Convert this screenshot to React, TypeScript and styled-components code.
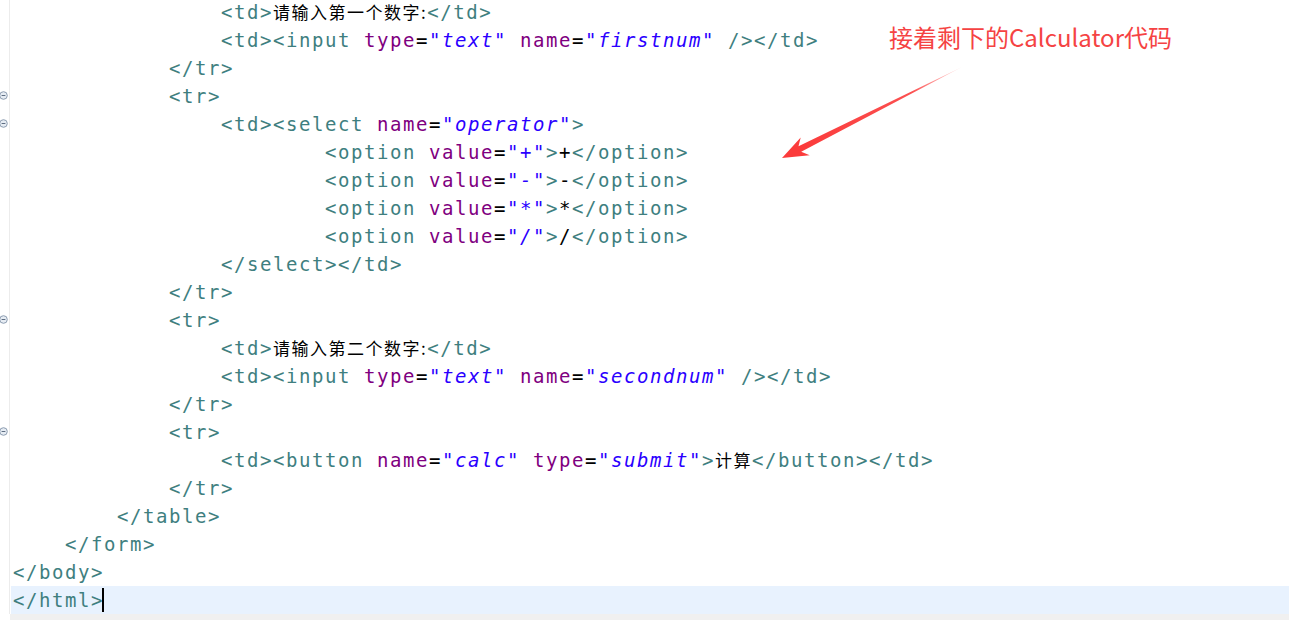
import React from "react"
import styled, { createGlobalStyle } from "styled-components"

type Kind = "tag" | "attr" | "val" | "plain" | "cjk"
type Token = [Kind, string]
type Line = { indent: number; fold?: boolean; tokens: Token[] }

const CHAR = 13

const tag = (s: string): Token => ["tag", s]
const attr = (s: string): Token => ["attr", s]
const val = (s: string): Token => ["val", s]
const txt = (s: string): Token => ["plain", s]
const cjk = (s: string): Token => ["cjk", s]

const option = (v: string): Line => ({
  indent: 24,
  tokens: [tag("<option"), txt(" "), attr("value"), txt("="), val(`"${v}"`), tag(">"), txt(v), tag("</option>")],
})

const lines: Line[] = [
  { indent: 16, tokens: [tag("<td>"), cjk("请输入第一个数字:"), tag("</td>")] },
  {
    indent: 16,
    tokens: [
      tag("<td><input"), txt(" "), attr("type"), txt("="), val('"text"'), txt(" "),
      attr("name"), txt("="), val('"firstnum"'), tag(" /></td>"),
    ],
  },
  { indent: 12, tokens: [tag("</tr>")] },
  { indent: 12, fold: true, tokens: [tag("<tr>")] },
  { indent: 16, fold: true, tokens: [tag("<td><select"), txt(" "), attr("name"), txt("="), val('"operator"'), tag(">")] },
  option("+"),
  option("-"),
  option("*"),
  option("/"),
  { indent: 16, tokens: [tag("</select></td>")] },
  { indent: 12, tokens: [tag("</tr>")] },
  { indent: 12, fold: true, tokens: [tag("<tr>")] },
  { indent: 16, tokens: [tag("<td>"), cjk("请输入第二个数字:"), tag("</td>")] },
  {
    indent: 16,
    tokens: [
      tag("<td><input"), txt(" "), attr("type"), txt("="), val('"text"'), txt(" "),
      attr("name"), txt("="), val('"secondnum"'), tag(" /></td>"),
    ],
  },
  { indent: 12, tokens: [tag("</tr>")] },
  { indent: 12, fold: true, tokens: [tag("<tr>")] },
  {
    indent: 16,
    tokens: [
      tag("<td><button"), txt(" "), attr("name"), txt("="), val('"calc"'), txt(" "),
      attr("type"), txt("="), val('"submit"'), tag(">"), cjk("计算"), tag("</button></td>"),
    ],
  },
  { indent: 12, tokens: [tag("</tr>")] },
  { indent: 8, tokens: [tag("</table>")] },
  { indent: 4, tokens: [tag("</form>")] },
  { indent: 0, tokens: [tag("</body>")] },
  { indent: 0, tokens: [tag("</html>")] },
]

const FoldIcon = () => (
  <svg width="9" height="9" viewBox="0 0 9 9">
    <circle cx="4.5" cy="4.5" r="3.8" fill="#e6ecf3" stroke="#8c9cb0" strokeWidth="1" />
    <line x1="2.6" y1="4.5" x2="6.4" y2="4.5" stroke="#5d6d82" strokeWidth="1" />
  </svg>
)

export default function App() {
  const last = lines.length - 1
  return (
    <>
      <GlobalStyle />
      <Editor>
        <Rows>
          {lines.map((line, i) => (
            <Row key={i}>
              <Gutter>{line.fold && <FoldIcon />}</Gutter>
              <Code $current={i === last} $indent={line.indent}>
                {line.tokens.map(([kind, text], j) => (
                  <Tok key={j} $kind={kind}>
                    {text}
                  </Tok>
                ))}
                {i === last && <Caret />}
              </Code>
            </Row>
          ))}
        </Rows>
        <Footer />
        <Note>接着剩下的Calculator代码</Note>
        <Arrow viewBox="775 60 195 105" width="195" height="105">
          <defs>
            <linearGradient id="arrowFade" x1="961" y1="67" x2="800" y2="150" gradientUnits="userSpaceOnUse">
              <stop offset="0" stopColor="#ff4444" stopOpacity="0.15" />
              <stop offset="0.3" stopColor="#fb3d3d" stopOpacity="0.9" />
              <stop offset="1" stopColor="#fb3b3b" />
            </linearGradient>
          </defs>
          <polygon
            points="961.5,67.3 801.2,151.7 809.7,155.2 782,158 800.7,137.4 798.5,146.3"
            fill="url(#arrowFade)"
          />
        </Arrow>
      </Editor>
    </>
  )
}

const GlobalStyle = createGlobalStyle`
  html, body {
    margin: 0;
    padding: 0;
    background: #ffffff;
    overflow: hidden;
  }
`
const Editor = styled.div`
  position: relative;
  width: 1289px;
  height: 620px;
  overflow: hidden;
  display: flex;
  flex-direction: column;
  background: #ffffff;
`
const Rows = styled.div`
  margin-top: -2px;
  display: flex;
  flex-direction: column;
`
const Row = styled.div`
  display: flex;
  height: 28px;
`
const Gutter = styled.div`
  flex: 0 0 9px;
  border-right: 1px solid #ececec;
  display: flex;
  align-items: center;
  overflow: hidden;

  & svg {
    margin-left: -1px;
    margin-top: -1px;
  }
`
const Code = styled.div<{ $current?: boolean; $indent: number }>`
  flex: 1;
  margin-left: 1px;
  padding-left: ${(p) => 2 + p.$indent * CHAR}px;
  display: flex;
  align-items: center;
  white-space: pre;
  font-family: "DejaVu Sans Mono", "Liberation Mono", monospace;
  font-size: 19px;
  letter-spacing: 1.56px;
  line-height: 28px;
  color: #000000;
  background: ${(p) => (p.$current ? "#e8f2fe" : "transparent")};
`
const tokenColor: Record<Kind, string> = {
  tag: "#3f7f7f",
  attr: "#7f007f",
  val: "#2a00ff",
  plain: "#000000",
  cjk: "#000000",
}
const Tok = styled.span<{ $kind: Kind }>`
  color: ${(p) => tokenColor[p.$kind]};
  font-style: ${(p) => (p.$kind === "val" ? "italic" : "normal")};
  ${(p) =>
    p.$kind === "cjk" &&
    `
    font-family: "Noto Sans CJK SC", sans-serif;
    font-size: 17px;
    letter-spacing: 1.5px;
  `}
`
const Caret = styled.span`
  display: inline-block;
  width: 2px;
  height: 24px;
  margin-left: -2px;
  background: #000000;
`
const Footer = styled.div`
  flex: 1;
  margin-left: 10px;
  background: #f0f0f0;
`
const Note = styled.div`
  position: absolute;
  left: 889px;
  top: 21px;
  font-family: "Noto Sans CJK SC", "Noto Sans", sans-serif;
  font-size: 24px;
  line-height: 32px;
  color: #f54343;
  white-space: nowrap;
`
const Arrow = styled.svg`
  position: absolute;
  left: 775px;
  top: 60px;
`
